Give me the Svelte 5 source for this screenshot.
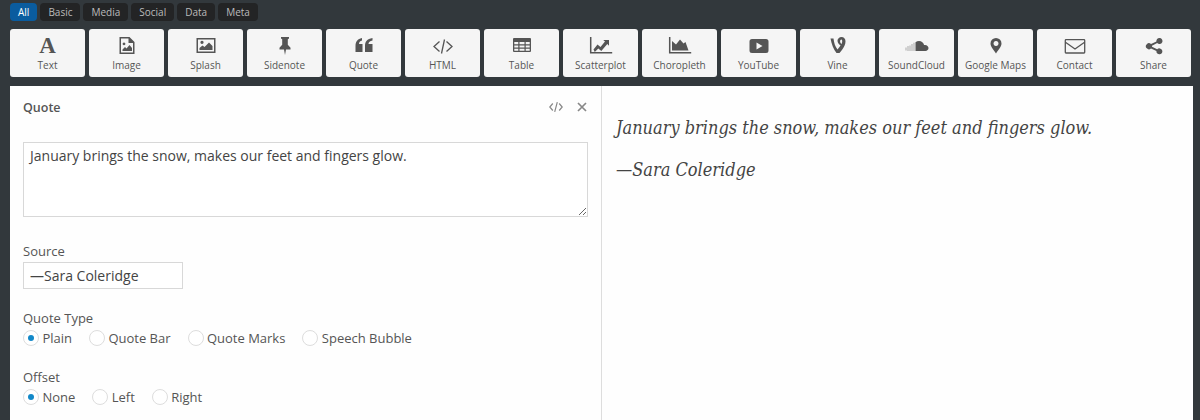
<script>
  const blocks = [
    { label: 'Text', glyph: 'A' },
    { label: 'Image', fill: 'M4.5 1h10l5 5v12h-15z M6 2.5v14h12V7h-4.5V2.5z M7.5 15v-1.5l2.5-2.5 1.5 1.5 3-3.5 2.5 3V15z M9 6.5a1.4 1.4 0 1 0 .01 0z' },
    { label: 'Splash', fill: 'M2.5 2h19v15h-19z M4 3.5v12h16v-12z M5.5 14v-2l3-2.5 2 1.5 4.5-4.5 3.5 3.5V14z M8 4.8a1.6 1.6 0 1 0 .01 0z' },
    { label: 'Sidenote', fill: 'M8 1h8v1.6l-1.2.6v5.6l2.7 3v1.7H13L12 19l-1-5.5H6.5v-1.7l2.7-3V3.2L8 2.6z' },
    { label: 'Quote', fill: 'M3.5 10C3.5 5.5 5.5 3 10 2v2.5C8 5 7 6.2 7 8h3.5v8h-7z M13 10c0-4.5 2-7 7.5-8v2.5C18 5 16.5 6.2 16.5 8h4v8H13z' },
    { label: 'HTML', stroke: 'M8.500 5.500 3 10.500 8.500 15.500 M15.500 5.500 21 10.500 15.500 15.500 M13.500 3.500 10.500 17.500', thin: true },
    { label: 'Table', fill: 'M4 2h16a1 1 0 0 1 1 1v12a1 1 0 0 1-1 1H4a1 1 0 0 1-1-1V3a1 1 0 0 1 1-1z M4.300 6v2.200h4V6z M9.500 6v2.200h5V6z M15.700 6v2.200h4V6z M4.300 9.400v2.200h4V9.400z M9.500 9.400v2.200h5V9.400z M15.700 9.400v2.200h4V9.400z M4.300 12.800v2h4v-2z M9.500 12.800v2h5v-2z M15.700 12.800v2h4v-2z' },
    { label: 'Scatterplot', stroke: 'M1.700 1v15.800h21.500', fill: 'M4.500 13.500l4-5 3 2.500 4.500-5.500-1.800-1.500H20v5.700l-1.700-1.700-6 7-3-2.500-3.500 3.500z' },
    { label: 'Choropleth', stroke: 'M1.700 1v15.800h21.500', fill: 'M4 14.500V5l4 3.500 4-5 3.500 4 2-1.500 3 8.500z' },
    { label: 'YouTube', fill: 'M5 3h14q2.500 0 2.500 2.500v9Q21.500 17 19 17H5q-2.500 0-2.500-2.500v-9Q2.500 3 5 3z M9.500 6.500v7l6-3.500z' },
    { label: 'Vine', fill: 'M4.500 2.500h3c.5 4 1.500 8 4 11 1-1 2.200-2.500 3-4.200-1.800-1-3-2.800-3-4.800C11.500 3 13.300 1 15.500 1c2.300 0 4 1.800 4 4.300 0 1.400-.3 3-.9 4.200-1.400 3-3.500 5.600-5.100 7.500h-3C7.500 13.500 5.500 8 4.500 2.500z M15.500 3.500c-.9 0-1.400.8-1.400 2 0 1 .5 1.800 1.500 2.400.4-.9.6-1.800.6-2.600 0-1.100-.2-1.800-.7-1.800z' },
    { label: 'SoundCloud', fill: 'M10.500 15V6.200C11.500 5.400 12.800 5 14 5c2.600 0 4.700 1.800 5.100 4.100 2.300-.6 4.400.9 4.400 3 0 1.700-1.400 2.900-3 2.900z', fade: 'M.5 11.500h1v3h-1z M2.500 10h1v5h-1z M4.500 9.500h1V15h-1z M6.500 8h1v7h-1z M8.500 6.800h1V15h-1z' },
    { label: 'Google Maps', fill: 'M12 2a5.500 5.500 0 0 1 5.500 5.500c0 3-3.500 7-5.500 10-2-3-5.500-7-5.500-10A5.500 5.500 0 0 1 12 2z M12 5a2.500 2.500 0 1 0 .01 0z' },
    { label: 'Contact', stroke: 'M3 3.700h18a.7.7 0 0 1 .7.7v11.900a.7.7 0 0 1-.7.7H3a.7.7 0 0 1-.7-.7V4.400a.7.7 0 0 1 .7-.7z M2.800 6.500 12 13l9.200-6.500', thin: true },
    { label: 'Share', fill: 'M17.500 2a3 3 0 1 1-2.300 4.900L10 9.700a3 3 0 0 1 0 1.100l5.200 2.500a3 3 0 1 1-.8 1.700L9 12.400a3 3 0 1 1 0-4.300l5.400-2.600A3 3 0 0 1 17.500 2z' }
  ];

  const tabs = ['All', 'Basic', 'Media', 'Social', 'Data', 'Meta'];
  const quote = 'January brings the snow, makes our feet and fingers glow.';
  const source = '—Sara Coleridge';

  const radioGroups = [
    { title: 'Quote Type', name: 'type', options: ['Plain', 'Quote Bar', 'Quote Marks', 'Speech Bubble'] },
    { title: 'Offset', name: 'offset', options: ['None', 'Left', 'Right'] }
  ];
</script>

<main>
  <nav class="tabs">
    {#each tabs as tab, i}
      <button class="tab" class:active={i === 0}>{tab}</button>
    {/each}
  </nav>

  <div class="blocks">
    {#each blocks as block}
      <button class="block">
        {#if block.glyph}
          <span class="glyph">{block.glyph}</span>
        {:else}
          <svg width="24" height="20" viewBox="0 0 24 20">
            {#if block.fade}<path d={block.fade} fill="#aaa" />{/if}
            {#if block.stroke}<path d={block.stroke} fill="none" stroke="#555" stroke-width={block.thin ? 1.3 : 1.5} />{/if}
            {#if block.fill}<path d={block.fill} fill="#555" fill-rule="evenodd" />{/if}
          </svg>
        {/if}
        <span class="label">{block.label}</span>
      </button>
    {/each}
  </div>

  <div class="panels">
    <section class="editor">
      <header>
        <h2>Quote</h2>
        <div class="actions">
          <svg width="14" height="12" viewBox="0 0 14 12">
            <path d="M3.800 2.500.8 6 3.800 9.500 M10.200 2.500 13.200 6 10.200 9.500 M8.300 1.200 5.700 10.800" fill="none" stroke="#888" stroke-width="1.200" />
          </svg>
          <svg width="10" height="10" viewBox="0 0 10 10">
            <path d="M1 1l8 8M9 1l-8 8" fill="none" stroke="#888" stroke-width="1.700" />
          </svg>
        </div>
      </header>

      <textarea value={quote}></textarea>

      <label class="field" for="source">Source</label>
      <input id="source" type="text" value={source} />

      {#each radioGroups as group}
        <div class="group">
          <div class="field">{group.title}</div>
          <div class="options">
            {#each group.options as option, i}
              <label class="radio">
                <input type="radio" name={group.name} checked={i === 0} />
                {option}
              </label>
            {/each}
          </div>
        </div>
      {/each}
    </section>

    <section class="preview">
      <p>{quote}</p>
      <p>{source}</p>
    </section>
  </div>
</main>

<style>
  :global(body) {
    background: #32383c;
  }

  main {
    height: 420px;
    overflow: hidden;
    display: flex;
    flex-direction: column;
    background: #32383c;
    font-family: "Open Sans", sans-serif;
  }

  button {
    font-family: inherit;
    padding: 0;
    border: none;
    cursor: pointer;
  }

  .tabs {
    display: flex;
    gap: 3px;
    padding: 3px 10px 0;
  }

  .tab {
    height: 18px;
    padding: 0 8px;
    background: #232425;
    color: #bbb;
    font-size: 10px;
    border-radius: 4px;
  }

  .tab.active {
    background: #0a5c9f;
    color: #fff;
  }

  .blocks {
    display: flex;
    gap: 4px;
    padding: 8px 0 0 10px;
  }

  .block {
    flex: none;
    width: 75px;
    height: 48px;
    display: flex;
    flex-direction: column;
    align-items: center;
    background: #f5f5f5;
    border-radius: 3px;
    color: #555;
    padding-top: 7px;
  }

  .block svg,
  .glyph {
    height: 20px;
    display: block;
  }

  .glyph {
    font-family: "Liberation Serif", serif;
    font-weight: bold;
    font-size: 23px;
    line-height: 20px;
  }

  .label {
    font-size: 10px;
    line-height: 14px;
    margin-top: 2px;
    white-space: nowrap;
  }

  .panels {
    flex: 1;
    display: flex;
    margin: 9px 7px 0 10px;
    background: #fefefe;
  }

  .editor {
    width: 592px;
    box-sizing: border-box;
    padding: 0 13px;
    border-right: 1px solid #ddd;
    color: #555;
    font-size: 13px;
  }

  header {
    height: 42px;
    display: flex;
    align-items: center;
    justify-content: space-between;
  }

  h2 {
    margin: 0;
    font-size: 12.500px;
    font-weight: 600;
  }

  .actions {
    display: flex;
    align-items: center;
    gap: 14px;
    margin-right: 1px;
  }

  textarea,
  input[type="text"] {
    display: block;
    box-sizing: border-box;
    margin: 0;
    border: 1px solid #d8d8d8;
    background: #fff;
    color: #444;
    font-family: inherit;
    font-size: 14px;
    padding: 3px 6px;
    outline: none;
    border-radius: 0;
  }

  textarea {
    width: 565px;
    height: 75px;
    margin-top: 14px;
  }

  input[type="text"] {
    width: 160px;
    height: 27px;
  }

  .field {
    display: block;
    line-height: 18px;
  }

  label.field {
    margin-top: 25px;
    margin-bottom: 2px;
  }

  .group {
    margin-top: 20px;
  }

  .group + .group {
    margin-top: 21px;
  }

  .options {
    display: flex;
    gap: 17px;
    margin-top: 2px;
  }

  .radio {
    display: flex;
    align-items: center;
    gap: 3.400px;
    line-height: 18px;
  }

  input[type="radio"] {
    appearance: none;
    width: 16px;
    height: 16px;
    margin: 0;
    border: 1px solid #ddd;
    border-radius: 50%;
    background: #fff;
    display: grid;
    place-items: center;
  }

  input[type="radio"]:checked::before {
    content: "";
    width: 6px;
    height: 6px;
    border-radius: 50%;
    background: #1288c8;
  }

  .preview {
    flex: 1;
    padding: 31px 14px;
    font-family: "DejaVu Serif Condensed", "DejaVu Serif", serif;
    font-style: italic;
    font-size: 18px;
    color: #444;
  }

  .preview p {
    margin: 0 0 21px;
  }
</style>
